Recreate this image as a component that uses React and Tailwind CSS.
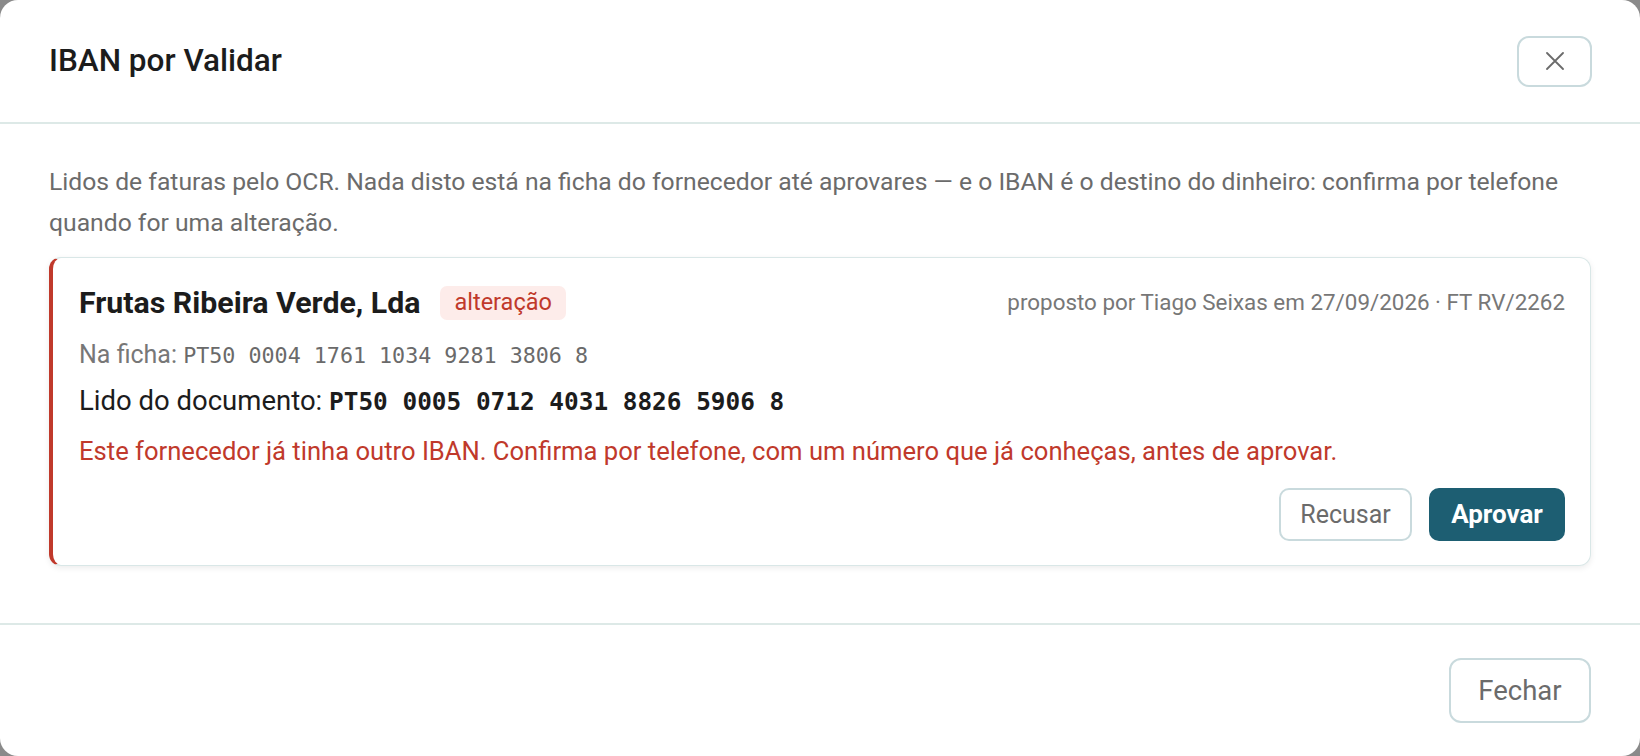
const sans = { fontFamily: "Roboto, 'Noto Sans', sans-serif" }

const CloseIcon = () => (
  <svg width="18" height="18" viewBox="0 0 18 18" fill="none">
    <path d="M1 1L17 17M17 1L1 17" stroke="#6b6b6b" strokeWidth="1.8" strokeLinecap="round" />
  </svg>
)

const IbanCard = () => (
  <div className="mt-[14px] rounded-[12px] border border-[#d9e7e7] border-l-4 border-l-[#c0392b] bg-white pl-[26px] pr-[25px] pt-[27px] pb-[24px] shadow-[0_2px_6px_rgba(0,0,0,0.08)]">
    <div className="flex h-[36px] items-center justify-between">
      <div className="flex items-center gap-[20px]">
        <h3 className="text-[30.3px] font-bold text-[#1c1c1c]">Frutas Ribeira Verde, Lda</h3>
        <span className="flex h-[34px] items-center rounded-[7px] bg-[#fdecea] px-[14px] text-[23.5px] text-[#c0392b]">
          alteração
        </span>
      </div>
      <p className="text-[22.4px] text-[#777]">proposto por Tiago Seixas em 27/09/2026 · FT RV/2262</p>
    </div>
    <p className="mt-[18px] text-[25px] leading-[32px] text-[#777]">
      Na ficha:{" "}
      <span className="font-['DejaVu_Sans_Mono',monospace] text-[21.7px] text-[#6a6a6a]">PT50 0004 1761 1034 9281 3806 8</span>
    </p>
    <p className="mt-[12px] text-[27.5px] leading-[34px] text-[#1c1c1c]">
      Lido do documento:{" "}
      <span className="font-['DejaVu_Sans_Mono',monospace] text-[24.4px] font-bold">PT50 0005 0712 4031 8826 5906 8</span>
    </p>
    <p className="mt-[15px] text-[25.6px] leading-[34px] text-[#c0392b]">
      Este fornecedor já tinha outro IBAN. Confirma por telefone, com um número que já conheças, antes de aprovar.
    </p>
    <div className="mt-[20px] flex justify-end gap-[17px]">
      <button className="h-[53px] w-[133px] rounded-[10px] border-2 border-[#c9dadd] bg-white text-[25px] text-[#6b6b6b]">
        Recusar
      </button>
      <button className="h-[53px] w-[136px] rounded-[10px] bg-[#1d5e72] text-[26px] font-bold text-white">
        Aprovar
      </button>
    </div>
  </div>
)

export default function App() {
  return (
    <div className="h-[756px] w-full bg-[#8a8a8a]" style={sans}>
      <div className="flex h-full flex-col overflow-hidden rounded-[18px] bg-white">
        <header className="flex h-[124px] shrink-0 items-center justify-between border-b-2 border-[#dde9e7] pl-[49px] pr-[48px]">
          <h2 className="text-[31.5px] font-medium text-[#1c1c1c]">IBAN por Validar</h2>
          <button className="flex h-[51px] w-[75px] items-center justify-center rounded-[12px] border-2 border-[#c9dadd] bg-white">
            <CloseIcon />
          </button>
        </header>
        <main className="flex-1 px-[49px] pt-[37px]">
          <p className="text-[24.7px] leading-[41px] text-[#6b6b6b]">
            Lidos de faturas pelo OCR. Nada disto está na ficha do fornecedor até aprovares — e o IBAN é o destino do dinheiro: confirma por telefone quando for uma alteração.
          </p>
          <IbanCard />
        </main>
        <footer className="flex h-[133px] shrink-0 justify-end border-t-2 border-[#dde9e7] pr-[49px] pt-[33px]">
          <button className="h-[65px] w-[142px] rounded-[12px] border-2 border-[#c9dadd] bg-white text-[27.5px] text-[#6b6b6b]">
            Fechar
          </button>
        </footer>
      </div>
    </div>
  )
}
